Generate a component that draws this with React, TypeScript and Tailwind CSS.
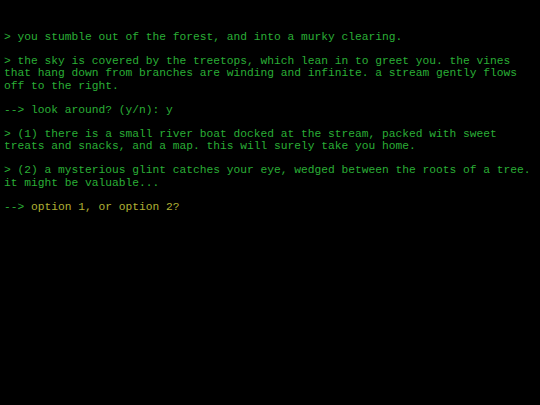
export default function App() {
  return (
    <div className="w-[540px] h-[405px] bg-black overflow-hidden pt-[31px] pl-[4px] pr-[4px] font-['Liberation_Mono','DejaVu_Sans_Mono',monospace] text-[11.25px] leading-[12.3px] text-[#2aae36] whitespace-pre-wrap">
      <p className="mb-[11.8px]">{"> you stumble out of the forest, and into a murky clearing."}</p>
      <p className="mb-[11.8px]">{"> the sky is covered by the treetops, which lean in to greet you. the vines\nthat hang down from branches are winding and infinite. a stream gently flows\noff to the right."}</p>
      <p className="mb-[11.8px]">{"--> look around? (y/n): y"}</p>
      <p className="mb-[11.8px]">{"> (1) there is a small river boat docked at the stream, packed with sweet\ntreats and snacks, and a map. this will surely take you home."}</p>
      <p className="mb-[11.8px]">{"> (2) a mysterious glint catches your eye, wedged between the roots of a tree.\nit might be valuable..."}</p>
      <p className="mb-[11.8px]">
        <span>{"--> "}</span>
        <span className="text-[#b0b034]">option 1, or option 2?</span>
      </p>
    </div>
  );
}
